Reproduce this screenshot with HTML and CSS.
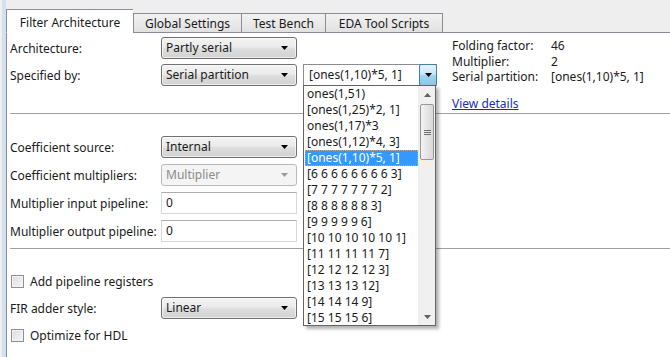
FILE: index.html
```html
<!DOCTYPE html>
<html>
<head>
    <title>Filter Architecture</title>
    <link rel="stylesheet" href="styles.css">
</head>
<body>
    <div class="window">
        <div class="edge"></div>
        <div class="panel">
            <div class="tabs">
                <div class="tab active">Filter Architecture</div>
                <div class="tab w-global">Global Settings</div>
                <div class="tab w-test">Test Bench</div>
                <div class="tab w-eda">EDA Tool Scripts</div>
                <div class="tab-fill"></div>
            </div>

            <div class="page">
                <div class="top">
                    <div class="fields">
                        <label>Architecture:</label>
                        <div class="select">Partly serial<svg class="arrow" width="7" height="4"><polygon points="0,0 7,0 3.5,4"/></svg></div>
                        <div></div>

                        <label>Specified by:</label>
                        <div class="select">Serial partition<svg class="arrow" width="7" height="4"><polygon points="0,0 7,0 3.5,4"/></svg></div>
                        <div class="combo">
                            <span class="combo-text">[ones(1,10)*5, 1]</span>
                            <span class="combo-btn"><svg width="7" height="4"><polygon points="0,0 7,0 3.5,4"/></svg></span>

                            <div class="popup">
                                <ul class="options">
                                    <li>ones(1,51)</li>
                                    <li>[ones(1,25)*2, 1]</li>
                                    <li>ones(1,17)*3</li>
                                    <li>[ones(1,12)*4, 3]</li>
                                    <li class="selected">[ones(1,10)*5, 1]</li>
                                    <li>[6 6 6 6 6 6 6 6 3]</li>
                                    <li>[7 7 7 7 7 7 7 2]</li>
                                    <li>[8 8 8 8 8 8 3]</li>
                                    <li>[9 9 9 9 9 6]</li>
                                    <li>[10 10 10 10 10 1]</li>
                                    <li>[11 11 11 11 7]</li>
                                    <li>[12 12 12 12 3]</li>
                                    <li>[13 13 13 12]</li>
                                    <li>[14 14 14 9]</li>
                                    <li>[15 15 15 6]</li>
                                </ul>
                                <div class="scrollbar">
                                    <div class="sb-arrow"><svg width="7" height="4"><polygon points="3.5,0 7,4 0,4"/></svg></div>
                                    <div class="sb-thumb"><span></span><span></span><span></span></div>
                                    <div class="sb-track"></div>
                                    <div class="sb-arrow"><svg width="7" height="4"><polygon points="0,0 7,0 3.5,4"/></svg></div>
                                </div>
                            </div>
                        </div>
                    </div>

                    <div class="info">
                        <div class="info-grid">
                            <span>Folding factor:</span><span>46</span>
                            <span>Multiplier:</span><span>2</span>
                            <span>Serial partition:</span><span>[ones(1,10)*5, 1]</span>
                        </div>
                        <a href="#" class="link">View details</a>
                    </div>
                </div>

                <hr class="sep">

                <div class="fields coeff">
                    <label>Coefficient source:</label>
                    <div class="select">Internal<svg class="arrow" width="7" height="4"><polygon points="0,0 7,0 3.5,4"/></svg></div>

                    <label>Coefficient multipliers:</label>
                    <div class="select disabled">Multiplier<svg class="arrow" width="7" height="4"><polygon points="0,0 7,0 3.5,4"/></svg></div>

                    <label>Multiplier input pipeline:</label>
                    <div class="textbox">0</div>

                    <label>Multiplier output pipeline:</label>
                    <div class="textbox">0</div>
                </div>

                <hr class="sep">

                <div class="fields extra">
                    <div class="check-row"><span class="checkbox"></span>Add pipeline registers</div>

                    <label>FIR adder style:</label>
                    <div class="select">Linear<svg class="arrow" width="7" height="4"><polygon points="0,0 7,0 3.5,4"/></svg></div>

                    <div class="check-row"><span class="checkbox"></span>Optimize for HDL</div>
                </div>
            </div>
        </div>
    </div>
</body>
</html>
```

FILE: styles.css
```css
body {
    margin: 0;
    font-family: "Noto Sans", sans-serif;
    font-size: 12px;
    color: #1a1a1a;
    background: #fff;
}
.window {
    display: flex;
    height: 357px;
    overflow: hidden;
}
.edge {
    width: 4px;
    border-left: 2px solid #f0f0f0;
    background: #d5e0ee;
}
.panel {
    flex: 1;
    display: flex;
    flex-direction: column;
}

/* tabs */
.tabs {
    flex-shrink: 0;
    display: flex;
    align-items: flex-end;
    height: 33px;
    background: #eeeeee;
}
.tab {
    box-sizing: border-box;
    height: 20px;
    padding-top: 1px;
    border: 1px solid #898c95;
    border-right: none;
    background: linear-gradient(#f2f2f2, #e1e1e1);
    text-align: center;
    line-height: 17px;
}
.tab.active {
    width: 127px;
    height: 24px;
    padding-top: 4px;
    background: #fff;
    border-bottom-color: #fff;
}
.w-global { width: 108px; }
.w-test { width: 84px; }
.w-eda { width: 118px; border-right: 1px solid #898c95; }
.tab-fill {
    flex: 1;
    border-bottom: 1px solid #898c95;
}

/* page */
.page {
    flex: 1;
    background: #fff;
    border-left: 1px solid #898c95;
    padding: 4px 0 0 3px;
}
.top {
    display: flex;
    align-items: flex-start;
    height: 76px;
}
.fields {
    display: grid;
    grid-template-columns: 151px 136px;
    grid-auto-rows: 22px;
    row-gap: 5px;
    align-items: center;
}
.top .fields {
    grid-template-columns: 151px 136px 140px;
}
.coeff {
    margin-top: 22px;
    row-gap: 6px;
}
.extra {
    margin-top: 21px;
}
.sep {
    margin: 0;
    border: none;
    border-top: 1px solid #a0a0a0;
}
.coeff + .sep {
    margin-top: 6px;
}

/* controls */
.select {
    position: relative;
    box-sizing: border-box;
    height: 22px;
    padding-left: 4px;
    line-height: 20px;
    border: 1px solid #707070;
    border-radius: 3px;
    background: linear-gradient(#f3f3f3 0%, #ebebeb 45%, #dddddd 55%, #d2d2d2 100%);
    box-shadow: inset 0 0 0 1px rgba(255,255,255,0.6);
}
.select .arrow {
    position: absolute;
    right: 8px;
    top: 8px;
    fill: #000;
}
.select.disabled {
    border-color: #b7b9bb;
    background: #f4f4f4;
    color: #8a8a8a;
    box-shadow: none;
}
.select.disabled .arrow {
    fill: #9a9a9a;
}
.textbox {
    box-sizing: border-box;
    height: 22px;
    padding-left: 4px;
    line-height: 20px;
    border: 1px solid #d5d8dd;
    border-top-color: #abadb3;
}
.check-row {
    grid-column: 1 / 3;
    display: flex;
    align-items: center;
}
.checkbox {
    box-sizing: border-box;
    width: 13px;
    height: 13px;
    margin: 0 6px 0 1px;
    border: 1px solid #8e8f8f;
    background: linear-gradient(135deg, #dcdcdc, #f6f6f6);
    box-shadow: inset 0 0 0 1px #f4f4f4;
}

/* combo with open list */
.combo {
    position: relative;
    box-sizing: border-box;
    width: 134px;
    height: 22px;
    margin-left: 6px;
    border: 1px solid #8a8c91;
    border-right: none;
    display: flex;
}
.combo-text {
    flex: 1;
    padding-left: 5px;
    line-height: 20px;
}
.combo-btn {
    box-sizing: border-box;
    width: 18px;
    height: 22px;
    margin-top: -1px;
    border: 1px solid #3c7fb1;
    border-radius: 2px;
    background: linear-gradient(#e6f4fc 0%, #c4e5f7 48%, #9fd3f0 52%, #8cc6e8 100%);
    display: flex;
    align-items: center;
    justify-content: center;
}
.combo-btn svg {
    fill: #000;
}
.popup {
    position: absolute;
    left: -1px;
    top: 20px;
    width: 133px;
    height: 241px;
    box-sizing: border-box;
    border: 1px solid #646464;
    background: #fff;
    box-shadow: 3px 3px 3px rgba(0,0,0,0.3);
    display: flex;
    z-index: 2;
}
.options {
    flex: 1;
    margin: 0;
    padding: 0;
    list-style: none;
    overflow: hidden;
}
.options li {
    height: 16px;
    line-height: 16px;
    margin-left: 1px;
    padding-left: 2px;
    white-space: nowrap;
}
.options li.selected {
    background: #3399ff;
    color: #fff;
    outline: 1px dotted #f0a040;
    outline-offset: -1px;
}
.scrollbar {
    width: 16px;
    display: flex;
    flex-direction: column;
    background: #f0f0f0;
    border-left: 1px solid #ececec;
}
.sb-arrow {
    height: 17px;
    display: flex;
    align-items: center;
    justify-content: center;
}
.sb-arrow svg {
    fill: #606060;
}
.sb-thumb {
    box-sizing: border-box;
    height: 56px;
    margin: 1px 1px 0 1px;
    border: 1px solid #979797;
    border-radius: 2px;
    background: linear-gradient(90deg, #f4f4f4, #e2e2e2 60%, #d8d8d8);
    display: flex;
    flex-direction: column;
    justify-content: center;
    align-items: center;
    gap: 1px;
}
.sb-thumb span {
    width: 7px;
    height: 1px;
    background: #6e6e6e;
}
.sb-track {
    flex: 1;
}

/* info */
.info {
    margin-left: 15px;
    padding-top: 1px;
}
.info-grid {
    display: grid;
    grid-template-columns: 99px auto;
    line-height: 15.5px;
}
.link {
    display: inline-block;
    margin-top: 10px;
    color: #1b2fb0;
}
```
